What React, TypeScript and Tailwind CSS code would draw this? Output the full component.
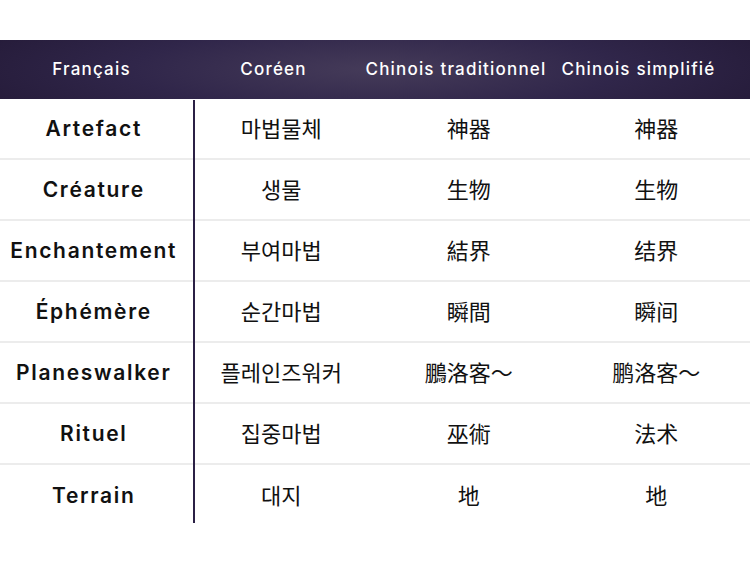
import React from 'react';

// types de cartes en quatre langues
const rows: [string, string, string, string][] = [
  ['Artefact', '마법물체', '神器', '神器'],
  ['Créature', '생물', '生物', '生物'],
  ['Enchantement', '부여마법', '結界', '结界'],
  ['Éphémère', '순간마법', '瞬間', '瞬间'],
  ['Planeswalker', '플레인즈워커', '鵬洛客～', '鹏洛客～'],
  ['Rituel', '집중마법', '巫術', '法术'],
  ['Terrain', '대지', '地', '地'],
];

const latin = "font-['Inter','Liberation_Sans',sans-serif]";

const App: React.FC = () => {
  return (
    <div className="w-[750px] h-[564px] bg-white pt-10">
      <div
        className={`grid grid-cols-[183px_181px_184px_181px] h-[59px] items-center text-white text-[17px] tracking-[0.07em] font-medium ${latin} bg-[radial-gradient(ellipse_65%_140%_at_50%_50%,#453b59_0%,#30264a_50%,#221834_100%)]`}
      >
        <div className="text-center">Français</div>
        <div className="text-center">Coréen</div>
        <div className="text-center whitespace-nowrap">Chinois traditionnel</div>
        <div className="text-center whitespace-nowrap">Chinois simplifié</div>
      </div>

      <div className="relative">
        {rows.map((r, i) => (
          <div
            key={r[0]}
            className={`grid grid-cols-4 h-[61px] items-center text-[#111] ${
              i < rows.length - 1 ? 'border-b-2 border-[#ececec]' : ''
            }`}
          >
            <div className={`text-center text-[21px] font-semibold tracking-[0.08em] ${latin}`}>{r[0]}</div>
            <div className="text-center text-[22px] leading-[28px] -mt-[4px] font-['Noto_Sans_CJK_KR',sans-serif]">{r[1]}</div>
            <div className="text-center text-[22px] leading-[28px] -mt-[4px] font-['Noto_Sans_CJK_TC',sans-serif]">{r[2]}</div>
            <div className="text-center text-[22px] leading-[28px] -mt-[4px] font-['Noto_Sans_CJK_SC',sans-serif]">{r[3]}</div>
          </div>
        ))}
        <div className="absolute left-[193px] top-[1px] bottom-[3px] w-[2px] bg-[#2b2045]" />
      </div>
    </div>
  );
};

export default App;
